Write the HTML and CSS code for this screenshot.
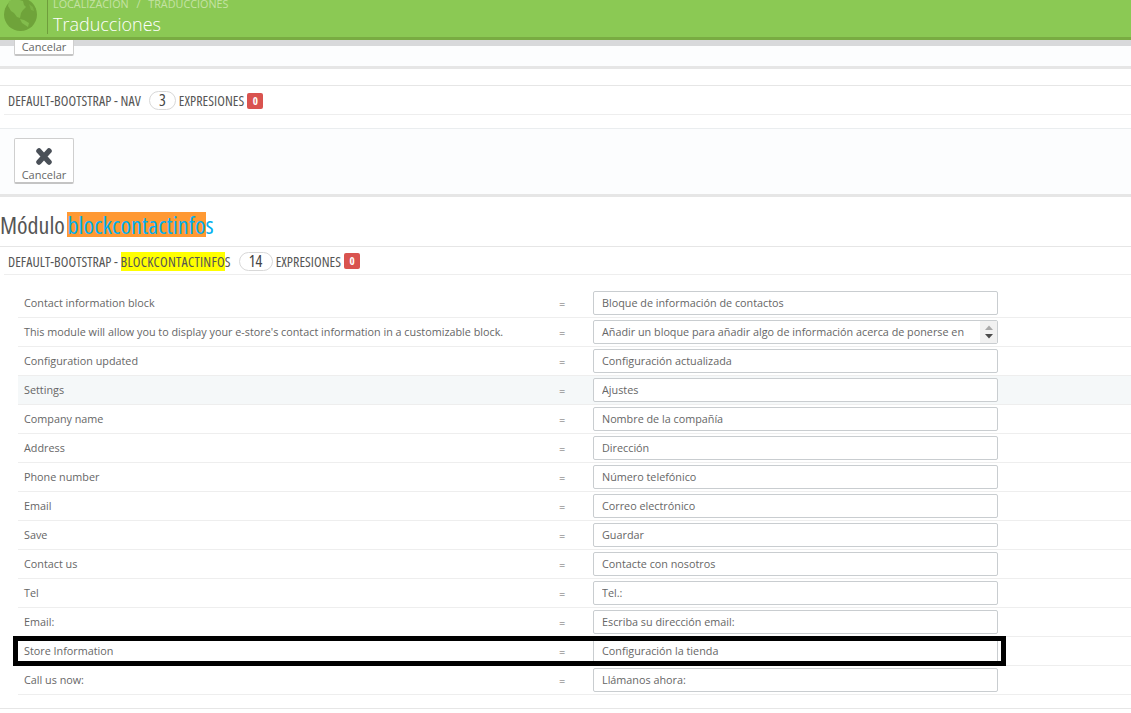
FILE: index.html
```html
<!DOCTYPE html>
<html lang="es">
<head>
<meta charset="utf-8">
<title>Traducciones</title>
<link rel="stylesheet" href="styles.css">
</head>
<body>
<header class="topbar">
  <svg class="globe" width="33" height="33" viewBox="0 0 33 33">
    <circle cx="16.5" cy="16.5" r="16.5" fill="#6fa33a"/>
    <path d="M5 3 L12 1 L19 3 L20 7 L22 9 L19 12 L17 15 L16 20 L13 19 L10 15 L7 13 L4 8 Z" fill="#82bc4c"/>
    <path d="M16 21 L20 22 L25 25 L24 29 L21 27 L18 25 Z" fill="#82bc4c"/>
    <path d="M25 6 L29 9 L30 13 L27 12 Z" fill="#7ab244"/>
  </svg>
  <div class="topbar-text">
    <div class="crumbs">Localización <span class="sep">/</span> Traducciones</div>
    <h1 class="page-title">Traducciones</h1>
  </div>
</header>

<div class="panel-footer first">
  <button class="tool-btn" type="button">Cancelar</button>
</div>

<div class="group-head nav-head">
  <span>DEFAULT-BOOTSTRAP - NAV</span>
  <span class="pill">3</span>
  <span>EXPRESIONES</span>
  <span class="badge">0</span>
</div>

<div class="panel-footer second">
  <button class="tool-btn" type="button">
    <svg class="x-svg" width="18" height="17" viewBox="0 0 18 17"><path d="M4 3 L14 14 M14 3 L4 14" fill="none" stroke="#4a5058" stroke-width="5.500" stroke-linecap="round"/></svg>
    Cancelar
  </button>
</div>

<h2 class="module-title">Módulo <a class="module-link"><mark class="orange">blockcontactinfo</mark>s</a></h2>

<div class="group-head">
  <span>DEFAULT-BOOTSTRAP - <mark class="yellow">BLOCKCONTACTINFO</mark>S</span>
  <span class="pill wide">14</span>
  <span>EXPRESIONES</span>
  <span class="badge">0</span>
</div>

<div class="rows">
  <div class="row"><span>Contact information block</span><span class="eq">=</span><input class="field" value="Bloque de información de contactos"></div>
  <div class="row"><span>This module will allow you to display your e-store's contact information in a customizable block.</span><span class="eq">=</span>
    <div class="field area">Añadir un bloque para añadir algo de información acerca de ponerse en
      <span class="spin"><svg width="10" height="22" viewBox="0 0 10 22"><path d="M5 4.500 L9 9 L1 9 Z" fill="#a9a9a9"/><path d="M1 13 L9 13 L5 17.500 Z" fill="#4a4a4a"/></svg></span>
    </div>
  </div>
  <div class="row"><span>Configuration updated</span><span class="eq">=</span><input class="field" value="Configuración actualizada"></div>
  <div class="row"><span>Settings</span><span class="eq">=</span><input class="field" value="Ajustes"></div>
  <div class="row"><span>Company name</span><span class="eq">=</span><input class="field" value="Nombre de la compañía"></div>
  <div class="row"><span>Address</span><span class="eq">=</span><input class="field" value="Dirección"></div>
  <div class="row"><span>Phone number</span><span class="eq">=</span><input class="field" value="Número telefónico"></div>
  <div class="row"><span>Email</span><span class="eq">=</span><input class="field" value="Correo electrónico"></div>
  <div class="row"><span>Save</span><span class="eq">=</span><input class="field" value="Guardar"></div>
  <div class="row"><span>Contact us</span><span class="eq">=</span><input class="field" value="Contacte con nosotros"></div>
  <div class="row"><span>Tel</span><span class="eq">=</span><input class="field" value="Tel.:"></div>
  <div class="row"><span>Email:</span><span class="eq">=</span><input class="field" value="Escriba su dirección email:"></div>
  <div class="row"><span>Store Information</span><span class="eq">=</span><input class="field" value="Configuración la tienda"><i class="black-box"></i></div>
  <div class="row"><span>Call us now:</span><span class="eq">=</span><input class="field" value="Llámanos ahora:"></div>
</div>
<div class="end-line"></div>
</body>
</html>
```
FILE: styles.css
```css
* { box-sizing: border-box; }
html, body { margin: 0; padding: 0; }
body {
  background: #fff;
  color: #666;
  font-family: "Open Sans", sans-serif;
  font-size: 10.800px;
  height: 713px;
  overflow: hidden;
  position: relative;
}
.topbar {
  position: absolute;
  top: 0; left: 0; right: 0;
  height: 40px;
  background: #8bc954;
  border-bottom: 3px solid #79ac42;
  z-index: 5;
  display: flex;
  padding-left: 4px;
}
.globe { margin-top: -2px; flex: none; }
.topbar-text {
  margin-left: 10px;
  border-left: 1px solid #6f9e3c;
  padding-left: 5px;
  height: 34px;
}
.crumbs {
  text-transform: uppercase;
  color: #c5e3a4;
  font-size: 10.800px;
  line-height: 8px;
  height: 9px;
  font-weight: 400;
}
.sep { margin: 0 5px; }
.page-title {
  margin: 3px 0 0;
  color: #fff;
  font-size: 18px;
  font-weight: 300;
  line-height: 24px;
}
.panel-footer {
  background: #fcfdfe;
  border-bottom: 3px solid #e6e6e6;
  padding: 10px 14px;
  height: 69px;
  position: relative;
}
.panel-footer.first::before {
  content: "";
  position: absolute;
  top: 40px; left: 0; right: 0;
  height: 6px;
  background: #d8d9db;
}
.panel-footer.second { border-top: 1px solid #eaedef; margin-top: 13px; padding-top: 9px; }
.tool-btn {
  display: flex;
  flex-direction: column;
  align-items: center;
  justify-content: flex-end;
  width: 60px;
  height: 46px;
  padding: 0;
  background: #fff;
  border: 1px solid #cfcfcf;
  border-bottom: 2px solid #c4c4c4;
  border-radius: 2px;
  color: #666;
  font-family: "Open Sans", sans-serif;
  font-size: 11px;
  line-height: 14px;
  position: relative;
}
.x-svg { margin-bottom: 3px; }
.group-head {
  display: flex;
  align-items: center;
  height: 29px;
  padding-left: 8px;
  border-top: 1px solid #e6e6e6;
  font-family: "Open Sans", sans-serif;
  font-stretch: 75%;
  font-size: 14px;
  letter-spacing: 0.050px;
  color: #555;
  position: relative;
}
.group-head.nav-head { margin-top: 16px; height: 30px; }
.group-head::after {
  content: "";
  position: absolute;
  left: 4px; right: 0; bottom: 0;
  border-bottom: 1px solid #eee;
}
.pill {
  display: inline-block;
  width: 27px;
  height: 19px;
  margin: 0 3px 0 8px;
  border: 1px solid #d8d8d8;
  border-radius: 10px;
  text-align: center;
  font-size: 16px;
  font-weight: 500;
  line-height: 17px;
  color: #444;
}
.pill.wide { width: 34px; }
.badge {
  display: inline-block;
  width: 16px;
  height: 16px;
  margin-left: 3px;
  background: #d9534f;
  border-radius: 2px;
  color: #fff;
  text-align: center;
  font-size: 11px;
  font-weight: 700;
  line-height: 16px;
}
.module-title {
  margin: 15px 0 0;
  height: 34px;
  font-family: "Open Sans", sans-serif;
  font-stretch: 75%;
  font-size: 24px;
  font-weight: 400;
  line-height: 26px;
  word-spacing: -2px;
  color: #555;
}
.module-link { color: #00aff0; letter-spacing: 0.120px; }
.orange { display: inline-block; height: 25px; line-height: 25px; background: #ff9933; color: #00aff0; }
.yellow { background: #ffff00; color: #555; letter-spacing: 0.250px; }
.rows { margin: 14px 0 0 18px; }
.row {
  display: grid;
  grid-template-columns: 535px 34px 405px;
  align-items: center;
  height: 29px;
  padding: 0 0 1px 6px;
  border-bottom: 1px solid #eee;
  position: relative;
  color: #666;
}
.row:nth-child(4) { background: #f5f8f9; }
.eq { font-size: 11px; padding-top: 1px; }
.field {
  display: block;
  height: 24px;
  width: 405px;
  padding: 0 8px;
  border: 1px solid #c9cdd0;
  border-radius: 2px;
  background: #fff;
  color: #666;
  font-family: "Open Sans", sans-serif;
  font-size: 10.800px;
  line-height: 22px;
  position: relative;
  white-space: nowrap;
}
.spin {
  position: absolute;
  right: 0; top: 0;
  width: 17px;
  height: 22px;
  background: #f1f1f1;
  display: flex;
  justify-content: center;
}
.black-box {
  position: absolute;
  left: -5px;
  top: -1px;
  width: 993px;
  height: 30px;
  border: 5px solid #000;
  pointer-events: none;
}
.end-line { margin-top: 13px; border-top: 1px solid #e6e6e6; }
```
